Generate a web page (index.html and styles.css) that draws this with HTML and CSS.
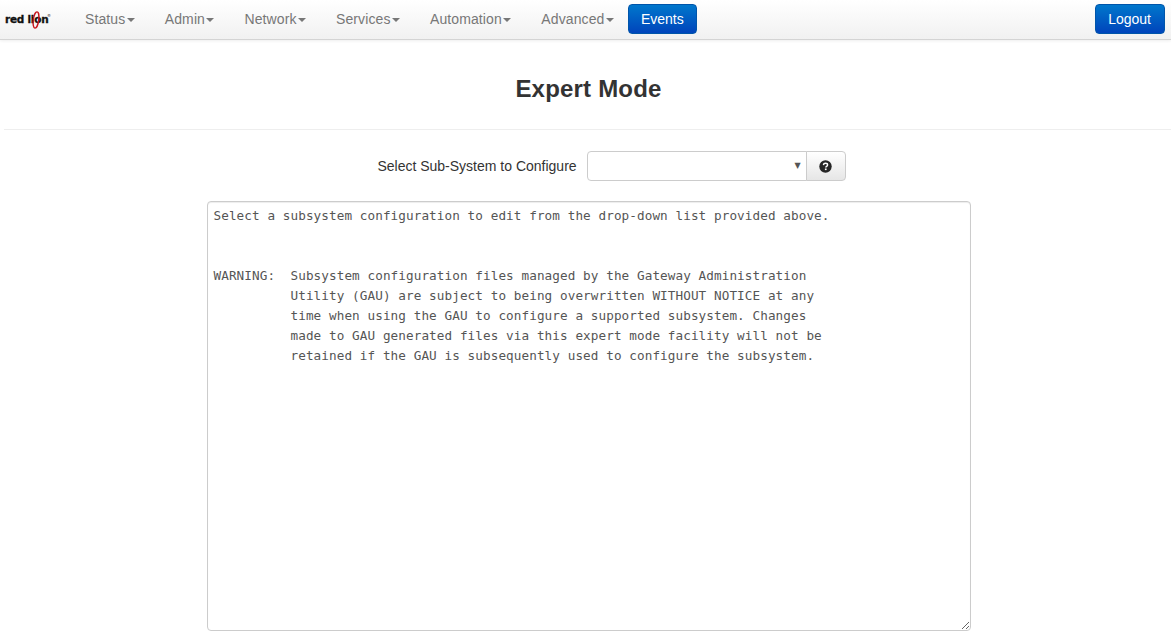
FILE: index.html
```html
<!DOCTYPE html>
<html lang="en">
<head>
<meta charset="utf-8">
<title>Expert Mode</title>
<link rel="stylesheet" href="styles.css">
</head>
<body>
<nav class="navbar">
  <a class="brand" href="#"><span class="brand-text">red lion</span><sup class="brand-reg">®</sup><svg class="brand-mark" width="10" height="20" viewBox="0 0 10 20"><ellipse cx="5" cy="10" rx="2.7" ry="8.2" fill="none" stroke="#c8161d" stroke-width="1.4" transform="rotate(8 5 10)"/></svg></a>
  <ul class="nav">
    <li><a href="#">Status<b class="caret"></b></a></li>
    <li><a href="#">Admin<b class="caret"></b></a></li>
    <li><a href="#">Network<b class="caret"></b></a></li>
    <li><a href="#">Services<b class="caret"></b></a></li>
    <li><a href="#">Automation<b class="caret"></b></a></li>
    <li><a href="#">Advanced<b class="caret"></b></a></li>
  </ul>
  <a class="btn-primary" href="#">Events</a>
  <a class="btn-primary logout" href="#">Logout</a>
</nav>
<main class="content">
  <h1 class="title">Expert Mode</h1>
  <hr class="rule">
  <form class="picker">
    <label class="picker-label">Select Sub-System to Configure</label>
    <div class="input-group">
      <div class="select"><span class="select-arrow">▼</span></div>
      <button type="button" class="help-btn"><svg width="13" height="13" viewBox="0 0 13 13"><circle cx="6.5" cy="6.5" r="6.2" fill="#262626"/><path d="M4.4 5.1C4.5 3.9 5.4 3.3 6.5 3.3C7.7 3.3 8.6 4 8.6 5C8.6 6.4 6.8 6.3 6.8 7.5" fill="none" stroke="#fff" stroke-width="1.4"/><rect x="5.9" y="8.5" width="1.7" height="1.6" fill="#fff"/></svg></button>
    </div>
  </form>
  <textarea class="editor" spellcheck="false">Select a subsystem configuration to edit from the drop-down list provided above.


WARNING:  Subsystem configuration files managed by the Gateway Administration
          Utility (GAU) are subject to being overwritten WITHOUT NOTICE at any
          time when using the GAU to configure a supported subsystem. Changes
          made to GAU generated files via this expert mode facility will not be
          retained if the GAU is subsequently used to configure the subsystem.</textarea>
</main>
</body>
</html>
```
FILE: styles.css
```css
* { box-sizing: border-box; }
html, body { height: 100%; }
body {
  margin: 0;
  overflow: hidden;
  background: #fff;
  color: #333;
  font: 14px/20px "Liberation Sans", Arial, sans-serif;
}
a { text-decoration: none; }
.navbar {
  display: flex;
  align-items: center;
  height: 40px;
  padding: 0 5px 2px;
  background: linear-gradient(#fff, #f1f1f1);
  border-bottom: 1px solid #d4d4d4;
  box-shadow: 0 1px 3px rgba(0,0,0,.07);
}
.brand {
  position: relative;
  width: 45px;
  margin-right: 20px;
  color: #111;
  font-family: "DejaVu Sans", sans-serif;
  font-size: 10.5px;
  font-weight: 700;
  letter-spacing: -.25px;
  white-space: nowrap;
}
.brand-text {
  display: block;
  -webkit-text-stroke: .3px #111;
}
.brand-reg {
  position: absolute;
  left: 42px;
  top: -3px;
  font-size: 4px;
  font-weight: 400;
}
.brand-mark { position: absolute; left: 26px; top: 1px; }
.nav {
  display: flex;
  margin: 0;
  padding: 0;
  list-style: none;
}
.nav a {
  display: block;
  padding: 0 15px;
  color: #777;
  letter-spacing: .1px;
}
.caret {
  display: inline-block;
  margin-left: 1.5px;
  vertical-align: middle;
  border-top: 4px solid #777;
  border-left: 4px solid transparent;
  border-right: 4px solid transparent;
}
.btn-primary {
  display: block;
  height: 30px;
  margin-left: -1px;
  padding: 4px 12px;
  color: #fff;
  background: linear-gradient(#0077cc, #0044bb);
  border: 1px solid #0055aa;
  border-radius: 4px;
}
.logout {
  margin-left: auto;
  margin-right: 1px;
  padding: 4px 13px 4px 12px;
}
.content {
  display: flex;
  flex-direction: column;
  align-items: center;
  padding: 0 0 0 6px;
}
.title {
  margin: 34px 0 25px;
  color: #333;
  font-size: 24px;
  line-height: 30px;
  font-weight: 700;
  letter-spacing: .2px;
}
.rule {
  align-self: stretch;
  margin: 0 0 0 -2px;
  border: 0;
  border-top: 1px solid #eee;
}
.picker {
  display: flex;
  align-items: center;
  margin: 21px 0 20px 46px;
  gap: 10px;
}
.picker-label { color: #333; }
.input-group { display: flex; }
.select {
  position: relative;
  width: 220px;
  height: 30px;
  background: #fff;
  border: 1px solid #ccc;
  border-radius: 4px 0 0 4px;
}
.select-arrow {
  position: absolute;
  right: 5px;
  top: 4px;
  color: #555;
  font: 8px/20px "DejaVu Sans", sans-serif;
}
.help-btn {
  display: flex;
  align-items: center;
  justify-content: center;
  width: 40px;
  height: 30px;
  margin-left: -1px;
  padding: 0;
  background: linear-gradient(#fff, #e6e6e6);
  border: 1px solid #ccc;
  border-radius: 0 4px 4px 0;
}
.editor {
  display: block;
  width: 764px;
  height: 430px;
  padding: 4px 5px 4px 6px;
  color: #555;
  background: #fff;
  border: 1px solid #ccc;
  border-radius: 4px;
  font: 12.67px/20px "DejaVu Sans Mono", monospace;
  letter-spacing: .08px;
  white-space: pre;
  overflow: hidden;
  outline: 0;
  box-shadow: inset 0 1px 1px rgba(0,0,0,.075);
}
```
